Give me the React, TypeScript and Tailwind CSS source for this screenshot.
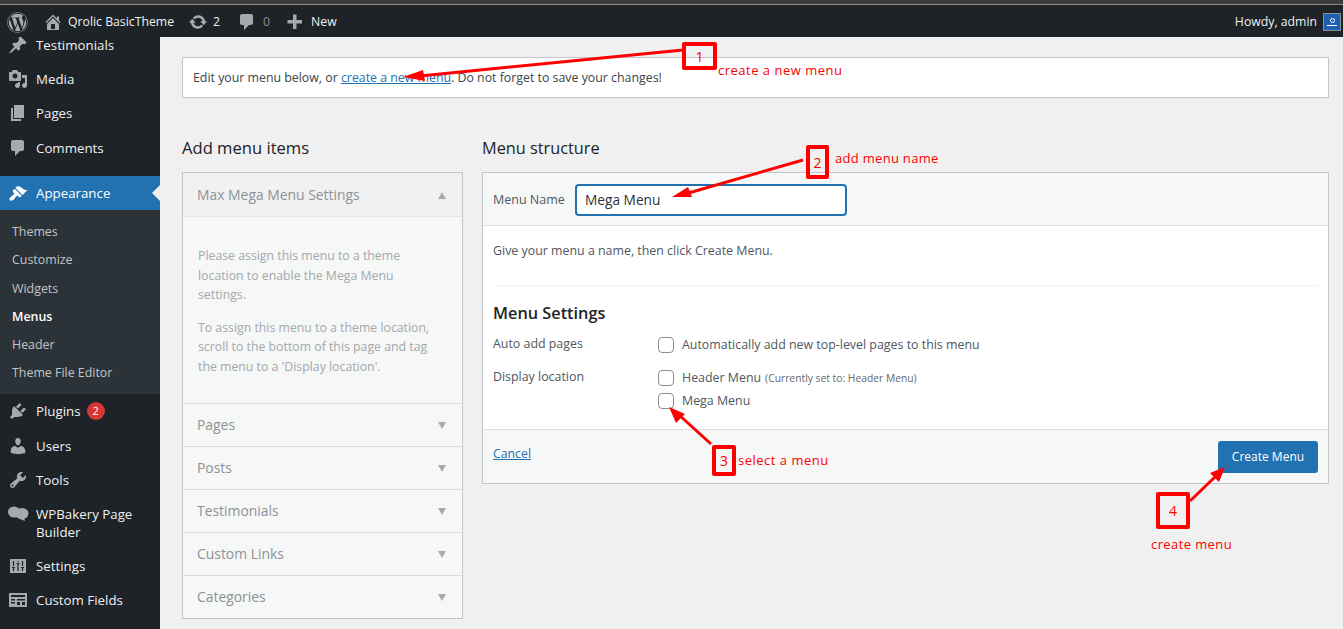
import React from "react";
import { FaWordpress } from "react-icons/fa";

// dashicons-style glyphs used by the wp-admin menu
const PATHS = {
  post: "M10.44 3.020l1.820-1.820 6.360 6.350-1.830 1.820c-1.050-.68-2.480-.57-3.410.36l-.75.75c-.92.93-1.040 2.350-.35 3.410l-1.830 1.820-2.410-2.410-2.800 2.790c-.42.42-3.380 2.710-3.800 2.290s1.860-3.390 2.280-3.810l2.790-2.790L4.100 9.360l1.830-1.820c1.050.69 2.480.57 3.400-.36l.75-.75c.93-.92 1.050-2.350.36-3.410z",
  media: "M13 11V4c0-.55-.45-1-1-1h-1.670L9 1H5L3.670 3H2c-.55 0-1 .45-1 1v7c0 .55.45 1 1 1h10c.55 0 1-.45 1-1zM7 4.500c1.380 0 2.500 1.120 2.500 2.500S8.380 9.500 7 9.500 4.500 8.380 4.500 7 5.620 4.500 7 4.500zM14 6h5v10.500c0 1.380-1.120 2.500-2.500 2.500S14 17.880 14 16.500s1.120-2.500 2.500-2.500c.17 0 .34.020.5.050V9h-3V6zm-4 8.050V13h2v3.500c0 1.380-1.120 2.500-2.500 2.500S7 17.880 7 16.500 8.120 14 9.500 14c.17 0 .34.020.5.050z",
  page: "M6 15V2h10v13H6zm-1 1h8v2H3V5h2v11z",
  comment: "M5 2h9c1.100 0 2 .9 2 2v7c0 1.100-.9 2-2 2h-2l-5 5v-5H5c-1.100 0-2-.9-2-2V4c0-1.100.9-2 2-2z",
  appearance: "M14.480 11.060L7.410 3.990l1.500-1.500c.5-.56 2.300-.47 3.510.32 1.210.8 1.430 1.280 2.910 2.100 1.180.64 2.450 1.260 4.450.85zm-.71.71L6.700 4.700 4.930 6.470c-.39.39-.39 1.020 0 1.410l1.060 1.060c.39.39.39 1.030 0 1.420-.6.6-1.430 1.110-2.210 1.690-.35.26-.7.53-1.010.84C1.430 13.710.96 15.120 1.540 15.700l.7.71c.58.58 1.990.11 3.800-1.240.31-.31.58-.66.85-1.010.57-.78 1.080-1.610 1.690-2.210.39-.39 1.020-.39 1.410 0l1.060 1.060c.39.39 1.020.39 1.410 0z",
  plugins: "M13.110 4.360L9.870 7.600 8 5.730l3.240-3.240c.35-.34 1.050-.2 1.560.32.52.51.66 1.210.31 1.550zm-8 1.770l.91-1.120 9.010 9.010-1.190.84c-.71.71-2.630 1.160-3.820 1.160H6.140L4.900 17.260c-.59.59-1.540.59-2.120 0-.59-.58-.59-1.530 0-2.120l1.240-1.240v-3.880c0-1.130.4-3.190 1.090-3.890zm7.260 3.970l3.240-3.240c.34-.35 1.040-.21 1.550.31.52.51.66 1.210.31 1.550l-3.240 3.250z",
  users: "M10 9.250c-2.270 0-2.730-3.440-2.730-3.440C7 4.020 7.820 2 9.970 2c2.160 0 2.980 2.020 2.710 3.810 0 0-.41 3.440-2.680 3.440zm0 2.570L12.720 10c2.390 0 4.520 2.330 4.520 4.530v2.490s-3.650 1.130-7.240 1.130c-3.650 0-7.240-1.130-7.240-1.130v-2.490c0-2.250 1.940-4.480 4.470-4.480z",
  tools: "M16.680 9.770c-1.340 1.340-3.300 1.670-4.950.99l-5.410 6.520c-.99.99-2.590.99-3.580 0s-.99-2.590 0-3.570l6.520-5.420c-.68-1.650-.35-3.610.99-4.950 1.280-1.280 3.120-1.620 4.720-1.060l-2.890 2.890 2.820 2.820 2.860-2.870c.53 1.580.18 3.390-1.080 4.650zM3.810 16.210c.4.39 1.040.39 1.430 0 .4-.4.4-1.040 0-1.430-.39-.4-1.030-.4-1.430 0-.39.39-.39 1.030 0 1.430z",
  home: "M16 8.500l1.530 1.530-1.060 1.060L10 4.620l-6.470 6.470-1.060-1.060L10 2.500l4 4v-2h2v4zm-6-2.460l6 5.990V18H4v-5.970zM12 17v-5H8v5h4z",
  updates: "M10.200 3.280c3.530 0 6.430 2.610 6.920 6h2.080l-3.500 4-3.500-4h2.320c-.45-1.970-2.210-3.440-4.320-3.440-1.450 0-2.730.71-3.540 1.780L4.950 5.660C6.230 4.200 8.110 3.280 10.200 3.280zm-.4 13.440c-3.520 0-6.430-2.610-6.920-6H.8l3.500-4c1.170 1.330 2.330 2.670 3.500 4H5.480c.45 1.970 2.210 3.440 4.320 3.440 1.450 0 2.730-.71 3.540-1.780l1.710 1.950c-1.280 1.460-3.150 2.390-5.250 2.390z",
  plus: "M17 8v3.500h-5.500V17H8v-5.500H2.500V8H8V2.500h3.500V8z",
};

function Dash({ d, size = 20, color = "#a7aaad" }: { d: string; size?: number; color?: string }) {
  return (
    <svg width={size} height={size} viewBox="0 0 20 20" fill={color}>
      <path d={d} fillRule="evenodd" />
    </svg>
  );
}

function BakeryIcon() {
  return (
    <svg width="21" height="18" viewBox="0 0 21 18" fill="#a7aaad">
      <ellipse cx="6" cy="7" rx="6" ry="5.500" />
      <ellipse cx="14" cy="8.500" rx="6.500" ry="5.500" />
      <path d="M8 12h8l1 4-5-2z" />
    </svg>
  );
}

function SettingsIcon() {
  return (
    <svg width="16" height="16" viewBox="0 0 16 16">
      <path d="M0 1h16v14H0z" fill="#a7aaad" />
      <path d="M3.500 3v5M2 9.500h3M3.500 10v3M8 3v1M6.500 5.500h3M8 6v7M12.500 3v5M11 9.500h3M12.500 10v3" stroke="#1d2327" strokeWidth="1.200" />
    </svg>
  );
}

function FieldsIcon() {
  return (
    <svg width="18" height="16" viewBox="0 0 18 16">
      <path d="M0 1h18v14H0z" fill="#a7aaad" />
      <path d="M2 3h14v2H2zM2 7h4v1.500H2zM2 10h4v1.500H2zM8 7h8v1.500H8zM8 10h3v3H8zM13 10h3v3h-3z" fill="#1d2327" />
    </svg>
  );
}

function SideItem({ icon, label, badge, multi }: { icon: React.ReactNode; label: string; badge?: string; multi?: boolean }) {
  return (
    <div className={`flex text-[13.300px] leading-[18px] text-[#f0f0f1] pt-[8.500px] ${multi ? "h-[52px]" : "h-[34.200px]"}`}>
      <div className="w-9 h-[18px] flex items-center justify-center shrink-0">{icon}</div>
      <div className="w-[116px]">
        {label}
        {badge && (
          <span className="inline-flex ml-[6px] w-[18px] h-[18px] rounded-full bg-[#d63638] text-white text-[11px] items-center justify-center align-top">
            {badge}
          </span>
        )}
      </div>
    </div>
  );
}

function SubItem({ label, active }: { label: string; active?: boolean }) {
  return (
    <div className={`h-[28.200px] flex items-center pl-3 pt-[3px] text-[12.400px] ${active ? "text-white font-semibold" : "text-[#c3c4c7]"}`}>
      {label}
    </div>
  );
}

function Sidebar() {
  return (
    <div className="w-40 shrink-0 bg-[#1d2327] overflow-hidden">
      <div className="-mt-[9.500px] h-[137.300px]">
        <SideItem icon={<Dash d={PATHS.post} />} label="Testimonials" />
        <SideItem icon={<Dash d={PATHS.media} />} label="Media" />
        <SideItem icon={<Dash d={PATHS.page} />} label="Pages" />
        <SideItem icon={<Dash d={PATHS.comment} />} label="Comments" />
      </div>
      <div className="relative mt-[11.200px] h-[34px] bg-[#2271b1] flex items-center pt-[2px] text-[13.300px] text-white">
        <div className="w-9 flex justify-center">
          <Dash d={PATHS.appearance} color="#ffffff" />
        </div>
        Appearance
        <div className="absolute right-0 top-[9px] border-y-[8px] border-y-transparent border-r-[8px] border-r-[#f0f0f1]" />
      </div>
      <div className="h-[184px] bg-[#2c3338] py-[7px]">
        <SubItem label="Themes" />
        <SubItem label="Customize" />
        <SubItem label="Widgets" />
        <SubItem label="Menus" active />
        <SubItem label="Header" />
        <SubItem label="Theme File Editor" />
      </div>
      <SideItem icon={<Dash d={PATHS.plugins} />} label="Plugins" badge="2" />
      <SideItem icon={<Dash d={PATHS.users} />} label="Users" />
      <SideItem icon={<Dash d={PATHS.tools} />} label="Tools" />
      <SideItem icon={<BakeryIcon />} label="WPBakery Page Builder" multi />
      <SideItem icon={<SettingsIcon />} label="Settings" />
      <SideItem icon={<FieldsIcon />} label="Custom Fields" />
    </div>
  );
}

function TopBar() {
  return (
    <div className="h-[32px] pt-[2px] bg-[#1d2327] flex items-center text-[12.250px] text-[#f0f0f1] shrink-0">
      <div className="w-[35px] flex justify-center">
        <FaWordpress size={21} className="text-[#a7aaad]" />
      </div>
      <div className="ml-2 flex items-center">
        <Dash d={PATHS.home} />
        <span className="ml-[5px]">Qrolic BasicTheme</span>
      </div>
      <div className="ml-[14px] flex items-center">
        <Dash d={PATHS.updates} />
        <span className="ml-[5px]">2</span>
      </div>
      <div className="ml-[17px] flex items-center">
        <Dash d={PATHS.comment} />
        <span className="ml-[6px] text-[#8c8f94]">0</span>
      </div>
      <div className="ml-[15px] flex items-center">
        <Dash d={PATHS.plus} />
        <span className="ml-[6px]">New</span>
      </div>
      <div className="ml-auto flex items-center pr-[2px]">
        <span>Howdy, admin</span>
        <div className="ml-[6px] w-[18px] h-[18px] border border-[#8c8f94] bg-[#1d5fb0] flex flex-col items-center justify-center">
          <span className="w-[5px] h-[5px] rounded-full border border-white" />
          <span className="mt-[2px] w-[10px] h-px bg-white" />
        </div>
      </div>
    </div>
  );
}

function Accordion({ label }: { label: string }) {
  return (
    <div className="h-[43px] flex items-center justify-between px-[14px] border-t border-[#dcdcde] text-[13.900px] text-[#8e9196] font-medium">
      {label}
      <span className="w-0 h-0 border-x-[4px] border-x-transparent border-t-[7px] border-t-[#a7aaad] mr-[2px]" />
    </div>
  );
}

function AddItems() {
  return (
    <div className="w-[281px] shrink-0">
      <h2 className="text-[16.600px] font-medium text-[#1d2327] leading-[24px] h-[36px]">Add menu items</h2>
      <div className="border border-[#c3c4c7] bg-[#f6f7f7]">
        <div className="h-[44px] pt-[2px] flex items-center justify-between px-[14px] bg-[#f1f1f2] border-b border-[#e4e4e6] text-[13.900px] text-[#8e9196] font-medium">
          Max Mega Menu Settings
          <span className="w-0 h-0 border-x-[4px] border-x-transparent border-b-[7px] border-b-[#a7aaad] mr-[2px]" />
        </div>
        <div className="h-[186px] pl-[15px] pr-[25px] pt-[29px] text-[12.300px] leading-[19.500px] text-[#a5a7ab]">
          <p>Please assign this menu to a theme location to enable the Mega Menu settings.</p>
          <p className="mt-[13px] -mr-[10px]">To assign this menu to a theme location, scroll to the bottom of this page and tag the menu to a 'Display location'.</p>
        </div>
        <Accordion label="Pages" />
        <Accordion label="Posts" />
        <Accordion label="Testimonials" />
        <Accordion label="Custom Links" />
        <Accordion label="Categories" />
      </div>
    </div>
  );
}

function Check({ className = "" }: { className?: string }) {
  return <span className={`block w-4 h-4 rounded-[4px] border border-[#8c8f94] bg-white ${className}`} />;
}

function MenuStructure() {
  return (
    <div className="flex-1">
      <h2 className="text-[16.300px] font-medium text-[#1d2327] leading-[24px] h-[36px]">Menu structure</h2>
      <div className="border border-[#c3c4c7] bg-white">
        <div className="h-[53px] bg-[#f6f7f7] border-b border-[#dcdcde] flex items-center px-[10px] text-[12.500px] text-[#50575e]">
          <span className="w-[82px] pt-[3px]">Menu Name</span>
          <div className="w-[272px] h-[32px] mt-px pt-px border-2 border-[#2271b1] rounded-[4px] bg-white flex items-center px-2 text-[13.700px] text-[#2c3338]">
            Mega Menu
          </div>
        </div>
        <div className="h-[203px] px-[10px] text-[12.400px] text-[#50575e]">
          <p className="pt-[15px] leading-[20px]">Give your menu a name, then click Create Menu.</p>
          <div className="mt-[24px] border-t border-[#f0f0f1]" />
          <h3 className="mt-[16px] text-[16.300px] font-semibold text-[#1d2327] leading-[22px]">Menu Settings</h3>
          <div className="mt-[11px] flex">
            <span className="w-[165px] leading-[20px] -mt-px">Auto add pages</span>
            <div className="flex items-center leading-[20px]">
              <Check className="mr-[8px]" />
              Automatically add new top-level pages to this menu
            </div>
          </div>
          <div className="mt-[13px] flex">
            <span className="w-[165px] leading-[20px] -mt-px">Display location</span>
            <div className="flex flex-col gap-[3px] leading-[20px]">
              <div className="flex items-center">
                <Check className="mr-[8px]" />
                Header Menu
                <span className="ml-[4px] text-[10.300px] text-[#646970]">(Currently set to: Header Menu)</span>
              </div>
              <div className="flex items-center">
                <Check className="mr-[8px]" />
                Mega Menu
              </div>
            </div>
          </div>
        </div>
        <div className="h-[54px] bg-[#f6f7f7] border-t border-[#dcdcde] flex items-center justify-between px-[10px]">
          <a className="text-[12.300px] text-[#2271b1] underline -mt-[4px]">Cancel</a>
          <button className="w-[100px] h-[32px] rounded-[3px] bg-[#2271b1] text-white text-[12px]">Create Menu</button>
        </div>
      </div>
    </div>
  );
}

function RedBox({ n, className }: { n: string; className: string }) {
  return (
    <div className={`absolute border-[4px] rounded-[2px] border-[#ff0000] flex items-center justify-center text-[#ff0000] text-[14px] ${className}`}>
      {n}
    </div>
  );
}

function RedLabel({ text, className }: { text: string; className: string }) {
  return <span className={`absolute text-[#ff0000] text-[13px] leading-[18px] whitespace-nowrap ${className}`}>{text}</span>;
}

function Annotations() {
  return (
    <>
      <svg className="absolute left-0 top-0 pointer-events-none" width="1343" height="629" viewBox="0 0 1343 629">
        <g stroke="#ff0000" strokeWidth="3" fill="#ff0000">
          <path d="M683 50L420 76" />
          <path d="M803 160L685 194" />
          <path d="M711 444L678 414" />
          <path d="M1190 501L1216 476" />
        </g>
        <g fill="#ff0000">
          <path d="M403 77L423 70L425 81z" />
          <path d="M672 197L688 187L692 197z" />
          <path d="M669 407L685 414L676 423z" />
          <path d="M1225 467L1219 482L1210 473z" />
        </g>
      </svg>
      <RedBox n="1" className="left-[682px] top-[42px] w-[35px] h-[28px]" />
      <RedBox n="2" className="left-[806px] top-[145px] w-[23px] h-[34px]" />
      <RedBox n="3" className="left-[712px] top-[445px] w-[24px] h-[31px]" />
      <RedBox n="4" className="left-[1156px] top-[492px] w-[34px] h-[37px]" />
      <RedLabel text="create a new menu" className="left-[718px] top-[61px] tracking-[0.5px]" />
      <RedLabel text="add menu name" className="left-[835px] top-[149px] tracking-[0.3px]" />
      <RedLabel text="select a menu" className="left-[738px] top-[451px] tracking-[0.5px]" />
      <RedLabel text="create menu" className="left-[1151px] top-[535px] tracking-[0.4px]" />
    </>
  );
}

export default function App() {
  return (
    <div className="relative w-[1343px] h-[629px] overflow-hidden bg-[#f0f0f1] flex flex-col font-['Open_Sans','Noto_Sans',sans-serif]">
      <div className="h-[5px] bg-[#3c3c3c] border-b border-[#8a8a8a] shrink-0" />
      <TopBar />
      <div className="flex flex-1 min-h-0">
        <Sidebar />
        <div className="flex-1 pl-[22px] pr-[14px] pt-[20px]">
          <div className="h-[41px] pt-[2px] border border-[#c3c4c7] bg-white flex items-center px-[10px] text-[12.350px] text-[#3c434a]">
            <span>
              Edit your menu below, or <a className="text-[#2271b1] underline">create a new menu</a>. Do not forget to save your changes!
            </span>
          </div>
          <div className="mt-[38px] flex gap-[19px]">
            <AddItems />
            <MenuStructure />
          </div>
        </div>
      </div>
      <Annotations />
    </div>
  );
}
